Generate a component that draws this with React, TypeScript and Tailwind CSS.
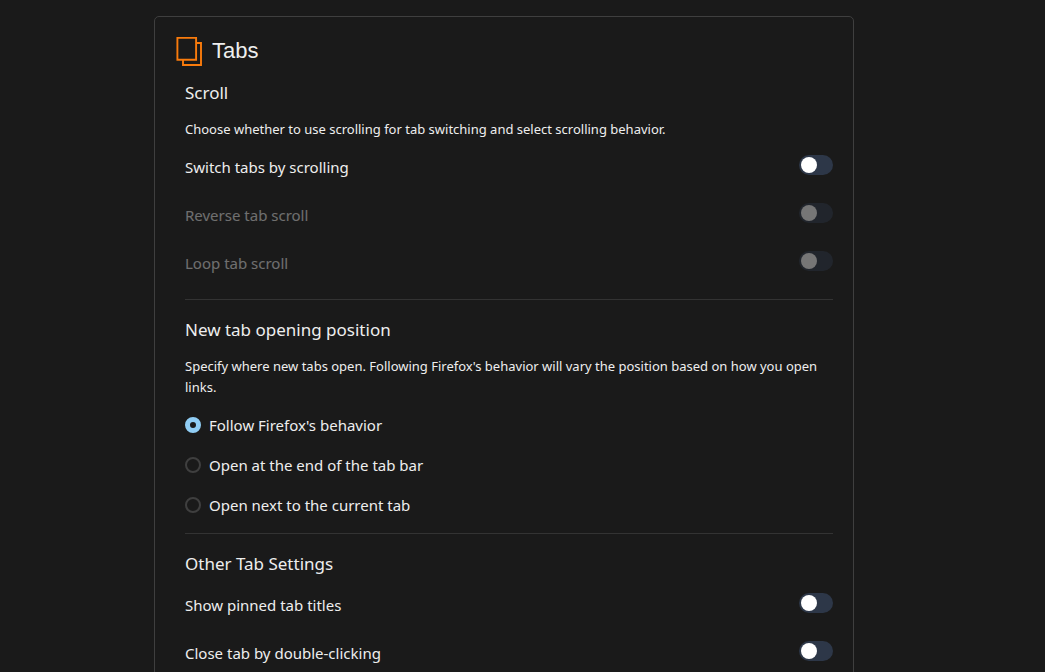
import { useState, type ReactNode } from "react";

function TabsIcon() {
  return (
    <svg width="26" height="30" viewBox="0 0 26 30" fill="none" stroke="#f97b0c" strokeWidth="1.9" aria-hidden="true">
      <path d="M1.4 1.9H20.1V23.8H1.4Z" />
      <path d="M20.1 7H25V29H7V23.8" />
    </svg>
  );
}

function Toggle({ label, disabled = false }: { label: string; disabled?: boolean }) {
  const [on, setOn] = useState(false);
  return (
    <label className={`flex h-6 items-start justify-between ${disabled ? "opacity-40" : ""}`}>
      <span className="text-[15px] leading-6">{label}</span>
      <input
        type="checkbox"
        role="switch"
        checked={on}
        disabled={disabled}
        onChange={(e) => setOn(e.target.checked)}
        className="h-5 w-[34px] shrink-0 appearance-none rounded-full bg-[#2d3748] p-0.5 before:block before:size-4 before:rounded-full before:bg-white checked:bg-[#90cdf4] checked:before:ml-3.5"
      />
    </label>
  );
}

function Section({ title, description, children }: { title: string; description?: string; children: ReactNode }) {
  return (
    <section className="border-b border-[#333333] pb-6 last:border-b-0">
      <h3 className="text-[17px] leading-7">{title}</h3>
      {description && <p className="mt-3 text-[13px] leading-[21px]">{description}</p>}
      {children}
    </section>
  );
}

const positions = ["Follow Firefox's behavior", "Open at the end of the tab bar", "Open next to the current tab"];

export default function App() {
  const [position, setPosition] = useState(positions[0]);
  return (
    <div className="h-screen overflow-hidden bg-[#1a1a1a] pt-4 pr-[37px] font-['Noto_Sans',sans-serif] text-[#eeeeee]">
      <main className="mx-auto max-w-[700px] rounded-[5px] border border-[#3f3f3f] pt-[18px] pr-5 pb-6 pl-[30px]">
        <header className="-ml-[9px] flex h-8 items-center gap-[10px]">
          <TabsIcon />
          <h2 className="font-['Liberation_Sans',sans-serif] text-[22px] leading-8">Tabs</h2>
        </header>
        <div className="mt-3 flex flex-col gap-4">
          <Section
            title="Scroll"
            description="Choose whether to use scrolling for tab switching and select scrolling behavior."
          >
            <div className="mt-[15px] flex flex-col gap-6">
              <Toggle label="Switch tabs by scrolling" />
              <Toggle label="Reverse tab scroll" disabled />
              <Toggle label="Loop tab scroll" disabled />
            </div>
          </Section>
          <Section
            title="New tab opening position"
            description="Specify where new tabs open. Following Firefox's behavior will vary the position based on how you open links."
          >
            <div className="mt-[15px] -mb-2 flex flex-col gap-4">
              {positions.map((name) => (
                <label key={name} className="flex items-center gap-2 text-[15px] leading-6">
                  <input
                    type="radio"
                    name="position"
                    checked={position === name}
                    onChange={() => setPosition(name)}
                    className="size-4 shrink-0 appearance-none rounded-full border-2 border-[#3f3f3f] checked:border-5 checked:border-[#90cdf4]"
                  />
                  {name}
                </label>
              ))}
            </div>
          </Section>
          <Section title="Other Tab Settings">
            <div className="mt-[15px] flex flex-col gap-6">
              <Toggle label="Show pinned tab titles" />
              <Toggle label="Close tab by double-clicking" />
            </div>
          </Section>
        </div>
      </main>
    </div>
  );
}
